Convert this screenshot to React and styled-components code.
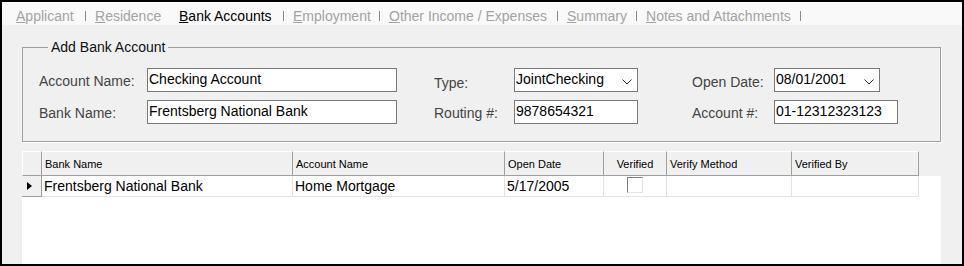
import styled, { createGlobalStyle } from 'styled-components';

const GlobalStyle = createGlobalStyle`
  body {
    margin: 0;
    background: #fff;
  }
`;

const tabs = [
  { label: 'Applicant', w: 78, sep: true },
  { label: 'Residence', w: 84, sep: false },
  { label: 'Bank Accounts', w: 113, sep: true, active: true },
  { label: 'Employment', w: 95, sep: true },
  { label: 'Other Income / Expenses', w: 177, sep: true },
  { label: 'Summary', w: 78, sep: true },
  { label: 'Notes and Attachments', w: 163, sep: true },
];

const columns = [
  { title: 'Bank Name', w: 251 },
  { title: 'Account Name', w: 212 },
  { title: 'Open Date', w: 99 },
  { title: 'Verified', w: 63, center: true },
  { title: 'Verify Method', w: 125 },
  { title: 'Verified By', w: 127 },
];

const Chevron = () => (
  <svg width="10" height="6" viewBox="0 0 10 6">
    <polyline points="0.5,0.5 5,5 9.5,0.5" fill="none" stroke="#333" strokeWidth="1" />
  </svg>
);

const App = () => {
  return (
    <Frame>
      <GlobalStyle />
      <TabStrip>
        {tabs.map((t) => (
          <TabGroup key={t.label}>
            <Tab $w={t.w} $active={t.active}>
              <u>{t.label[0]}</u>
              {t.label.slice(1)}
            </Tab>
            {t.sep && <Sep />}
          </TabGroup>
        ))}
      </TabStrip>

      <Content>
        <GroupBox>
          <Legend>Add Bank Account</Legend>
          <FormGrid>
            <Label $dy={5}>Account Name:</Label>
            <TextBox $w={250}>Checking Account</TextBox>
            <Label $indent={37} $dy={7}>Type:</Label>
            <Combo $w={124}>
              <span>JointChecking</span>
              <Chevron />
            </Combo>
            <Label $indent={54} $dy={6}>Open Date:</Label>
            <Combo $w={106}>
              <span>08/01/2001</span>
              <Chevron />
            </Combo>

            <Label $dy={5}>Bank Name:</Label>
            <TextBox $w={250}>Frentsberg National Bank</TextBox>
            <Label $indent={37} $dy={5}>Routing #:</Label>
            <TextBox $w={124}>9878654321</TextBox>
            <Label $indent={54} $dy={5}>Account #:</Label>
            <TextBox $w={124}>01-12312323123</TextBox>
          </FormGrid>
        </GroupBox>

        <DataGrid>
          <HeaderRow>
            <CornerCell />
            {columns.map((c) => (
              <HeadCell key={c.title} $w={c.w} $center={c.center}>
                {c.title}
              </HeadCell>
            ))}
          </HeaderRow>
          <GridBody>
            <DataRow>
              <RowHead>
                <Arrow />
              </RowHead>
              <Cell $w={251}>Frentsberg National Bank</Cell>
              <Cell $w={212}>Home Mortgage</Cell>
              <Cell $w={99}>5/17/2005</Cell>
              <Cell $w={63} $center>
                <CheckBox />
              </Cell>
              <Cell $w={125} />
              <Cell $w={127} />
            </DataRow>
          </GridBody>
        </DataGrid>
      </Content>
    </Frame>
  );
};

export default App;

const Frame = styled.div`
  width: 964px;
  height: 266px;
  box-sizing: border-box;
  border: 2px solid #000;
  display: flex;
  flex-direction: column;
  background: #f0f0f0;
  font-family: 'Liberation Sans', Arial, sans-serif;
  font-size: 14px;
  color: #000;
`;

const TabStrip = styled.div`
  height: 23px;
  flex-shrink: 0;
  display: flex;
  align-items: flex-start;
  padding-left: 5px;
  background: #f9f9f9;
`;

const TabGroup = styled.div`
  display: flex;
  align-items: flex-start;
`;

const Tab = styled.div`
  width: ${(p) => p.$w}px;
  box-sizing: border-box;
  padding: 6px 0 0 9px;
  line-height: 16px;
  white-space: nowrap;
  color: ${(p) => (p.$active ? '#000' : '#a3a3a3')};

  u {
    text-underline-offset: 1px;
  }
`;

const Sep = styled.div`
  width: 1px;
  height: 10px;
  margin-top: 9px;
  background: #8a8a8a;
`;

const Content = styled.div`
  flex: 1;
  display: flex;
  flex-direction: column;
  padding: 0 21px 0 20px;
  min-height: 0;
`;

const GroupBox = styled.fieldset`
  margin: 14px 0 0;
  padding: 13px 0 17px 16px;
  border: 1px solid #a0a0a0;
  box-shadow: 1px 1px 0 #fff;
  min-inline-size: 0;
`;

const Legend = styled.legend`
  margin-left: 9px;
  padding: 0 3px;
  line-height: 16px;
  color: #111;
`;

const FormGrid = styled.div`
  display: grid;
  grid-template-columns: 108px 250px 117px 124px 136px auto;
  row-gap: 8px;
  justify-items: start;
`;

const Label = styled.div`
  padding-left: ${(p) => p.$indent || 0}px;
  padding-top: ${(p) => p.$dy || 0}px;
  line-height: 16px;
  color: #444;
  white-space: nowrap;
`;

const TextBox = styled.div`
  width: ${(p) => p.$w}px;
  height: 24px;
  box-sizing: border-box;
  border: 1px solid #7a7a7a;
  background: #fff;
  padding: 2px 1px 0;
  line-height: 16px;
  white-space: nowrap;
`;

const Combo = styled(TextBox)`
  display: flex;
  justify-content: space-between;
  align-items: flex-start;
  padding-right: 5px;

  svg {
    margin-top: 8px;
  }
`;

const DataGrid = styled.div`
  flex: 1;
  margin-top: 9px;
  display: flex;
  flex-direction: column;
  min-height: 0;
`;

const HeaderRow = styled.div`
  display: flex;
  height: 25px;
  flex-shrink: 0;
`;

const HeadCell = styled.div`
  width: ${(p) => p.$w}px;
  box-sizing: border-box;
  border-top: 1px solid #fff;
  border-right: 1px solid #a0a0a0;
  border-bottom: 1px solid #a0a0a0;
  background: #f0f0f0;
  display: flex;
  align-items: center;
  justify-content: ${(p) => (p.$center ? 'center' : 'flex-start')};
  padding-left: ${(p) => (p.$center ? 0 : 3)}px;
  font-size: 11px;
  color: #000;
  white-space: nowrap;
`;

const CornerCell = styled(HeadCell)`
  width: 20px;
  border-left: 1px solid #fff;
`;

const GridBody = styled.div`
  flex: 1;
  background: #fff;
`;

const DataRow = styled.div`
  display: flex;
  height: 21px;
`;

const RowHead = styled.div`
  width: 20px;
  box-sizing: border-box;
  background: #f0f0f0;
  border-right: 1px solid #a0a0a0;
  border-bottom: 1px solid #a0a0a0;
  display: flex;
  align-items: center;
  padding-left: 5px;
`;

const Arrow = styled.div`
  width: 0;
  height: 0;
  border-top: 4.5px solid transparent;
  border-bottom: 4.5px solid transparent;
  border-left: 5px solid #000;
`;

const Cell = styled.div`
  width: ${(p) => p.$w}px;
  box-sizing: border-box;
  border-right: 1px solid #e3e3e3;
  border-bottom: 1px solid #e3e3e3;
  padding: 2px 0 0 ${(p) => (p.$center ? 0 : 2)}px;
  line-height: 16px;
  white-space: nowrap;
  display: flex;
  justify-content: ${(p) => (p.$center ? 'center' : 'flex-start')};
  align-items: flex-start;
`;

const CheckBox = styled.div`
  width: 16px;
  height: 16px;
  box-sizing: border-box;
  margin-top: -1px;
  border: 1px solid;
  border-color: #808080 #e3e3e3 #e3e3e3 #808080;
  background: #fff;
`;
